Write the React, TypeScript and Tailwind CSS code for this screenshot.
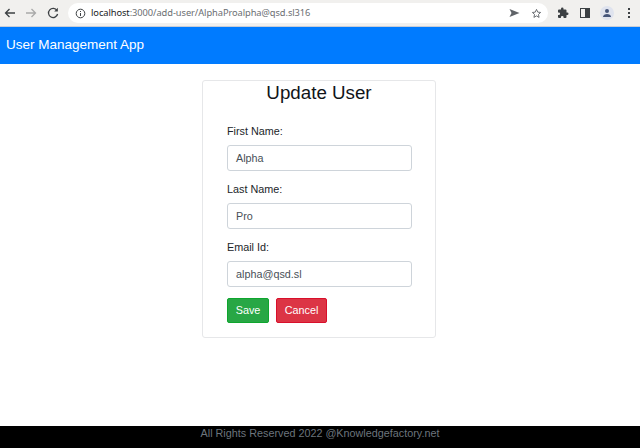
import React from "react";

function Field({ label, value }: { label: string; value: string }) {
  return (
    <div className="flex flex-col mb-[9px]">
      <label className="text-[10.8px] leading-[18px] text-[#212529] mb-[5px]">{label}</label>
      <div className="h-[26px] w-[185px] rounded-[3px] border border-[#ced4da] bg-white px-[8px] text-[10.8px] leading-[24px] text-[#495057]">
        {value}
      </div>
    </div>
  );
}

export default function App() {
  return (
    <div className="w-[640px] h-[448px] overflow-hidden flex flex-col bg-white font-['Liberation_Sans',Arial,sans-serif]">
      {/* Browser chrome */}
      <div className="h-[27px] shrink-0 bg-[#f1f0ee] border-b border-[#c9cdd6] flex items-center pl-[3px]">
        <svg width="14" height="14" viewBox="0 0 14 14" fill="none" stroke="#3c4043" strokeWidth="1.3">
          <path d="M12 7H2.500M6.500 3 2.500 7l4 4" />
        </svg>
        <svg width="14" height="14" viewBox="0 0 14 14" className="ml-[7px]" fill="none" stroke="#a9a9a9" strokeWidth="1.3">
          <path d="M2 7h9.500M7.500 3l4 4-4 4" />
        </svg>
        <svg width="14" height="14" viewBox="0 0 14 14" className="ml-[8px]" fill="none" stroke="#3c4043" strokeWidth="1.3">
          <path d="M11 4.500A4.600 4.600 0 1 0 11.600 8" />
          <path d="M11.800 1.800v3.600H8.200z" fill="#3c4043" stroke="none" />
        </svg>
        <div className="ml-[8px] w-[480px] h-[20px] rounded-full bg-white flex items-center pl-[7px] pr-[6px]">
          <svg width="11" height="11" viewBox="0 0 11 11" fill="none" stroke="#3c4043" strokeWidth="1">
            <circle cx="5.500" cy="5.500" r="4.300" />
            <path d="M5.500 5v3M5.500 3v1" />
          </svg>
          <span className="ml-[5px] text-[9.3px] font-['Noto_Sans',sans-serif] tracking-[-0.07px] whitespace-nowrap text-[#6b6e72]">
            <span className="text-[#202124]">localhost</span>:3000/add-user/AlphaProalpha@qsd.sl316
          </span>
          <div className="ml-auto flex items-center gap-[11px]">
            <svg width="11" height="10" viewBox="0 0 11 10">
              <path d="M0.500 1 10.500 5 0.500 9 2.500 5z" fill="#5f6368" />
            </svg>
            <svg width="11" height="11" viewBox="0 0 24 24" fill="none" stroke="#5f6368" strokeWidth="2">
              <path d="M12 3l2.700 6 6.300.7-4.700 4.300 1.300 6.500L12 17.200 6.400 20.500l1.300-6.500L3 9.700 9.300 9z" />
            </svg>
          </div>
        </div>
        <div className="ml-[9px] flex items-center">
          <svg width="12" height="12" viewBox="0 0 24 24" fill="#3c4043">
            <path d="M20.500 11H19V7a2 2 0 0 0-2-2h-4V3.500a2.500 2.500 0 0 0-5 0V5H4a2 2 0 0 0-2 2v3.800h1.500a2.700 2.700 0 0 1 0 5.400H2V20a2 2 0 0 0 2 2h3.800v-1.500a2.700 2.700 0 0 1 5.400 0V22H17a2 2 0 0 0 2-2v-4h1.500a2.500 2.500 0 0 0 0-5z" />
          </svg>
          <div className="ml-[11px] w-[10px] h-[10px] border-[1.5px] border-[#3c4043] flex justify-end">
            <div className="w-[4px] h-full bg-[#3c4043]" />
          </div>
          <div className="ml-[10px] w-[14px] h-[14px] rounded-full bg-[#dfe3ee] flex items-center justify-center">
            <svg width="10" height="10" viewBox="0 0 10 10" fill="#45557a">
              <circle cx="5" cy="3" r="2" />
              <path d="M1 9c0-2 2-3 4-3s4 1 4 3z" />
            </svg>
          </div>
          <div className="ml-[14px] flex flex-col gap-[2px]">
            <div className="w-[2px] h-[2px] bg-[#3c4043]" />
            <div className="w-[2px] h-[2px] bg-[#3c4043]" />
            <div className="w-[2px] h-[2px] bg-[#3c4043]" />
          </div>
        </div>
      </div>

      {/* App header */}
      <div className="h-[37px] shrink-0 bg-[#007bff] flex items-center pl-[6px]">
        <span className="text-[13.5px] text-white">User Management App</span>
      </div>

      {/* Main */}
      <div className="flex-1 min-h-0 pl-[202px] pt-[16px]">
        <div className="w-[234px] h-[258px] rounded-[3px] border border-[#e6e7e9] bg-white">
          <h3 className="text-center text-[18.75px] leading-[23px] text-[#101418] mb-[18px]">Update User</h3>
          <div className="pl-[24px]">
            <Field label="First Name:" value="Alpha" />
            <Field label="Last Name:" value="Pro" />
            <Field label="Email Id:" value="alpha@qsd.sl" />
            <div className="flex gap-[7px] mt-[11px]">
              <button className="h-[25px] w-[42px] rounded-[2px] border border-[#0ea62e] bg-[#28a745] text-[10.8px] text-white">Save</button>
              <button className="h-[25px] w-[51px] rounded-[2px] border border-[#d90f2b] bg-[#dc3545] text-[10.8px] text-white">Cancel</button>
            </div>
          </div>
        </div>
      </div>

      {/* Footer */}
      <div className="h-[22px] shrink-0 bg-black text-center text-[10.8px] leading-[15px] text-[#6c757d]">
        All Rights Reserved 2022 @Knowledgefactory.net
      </div>
    </div>
  );
}
